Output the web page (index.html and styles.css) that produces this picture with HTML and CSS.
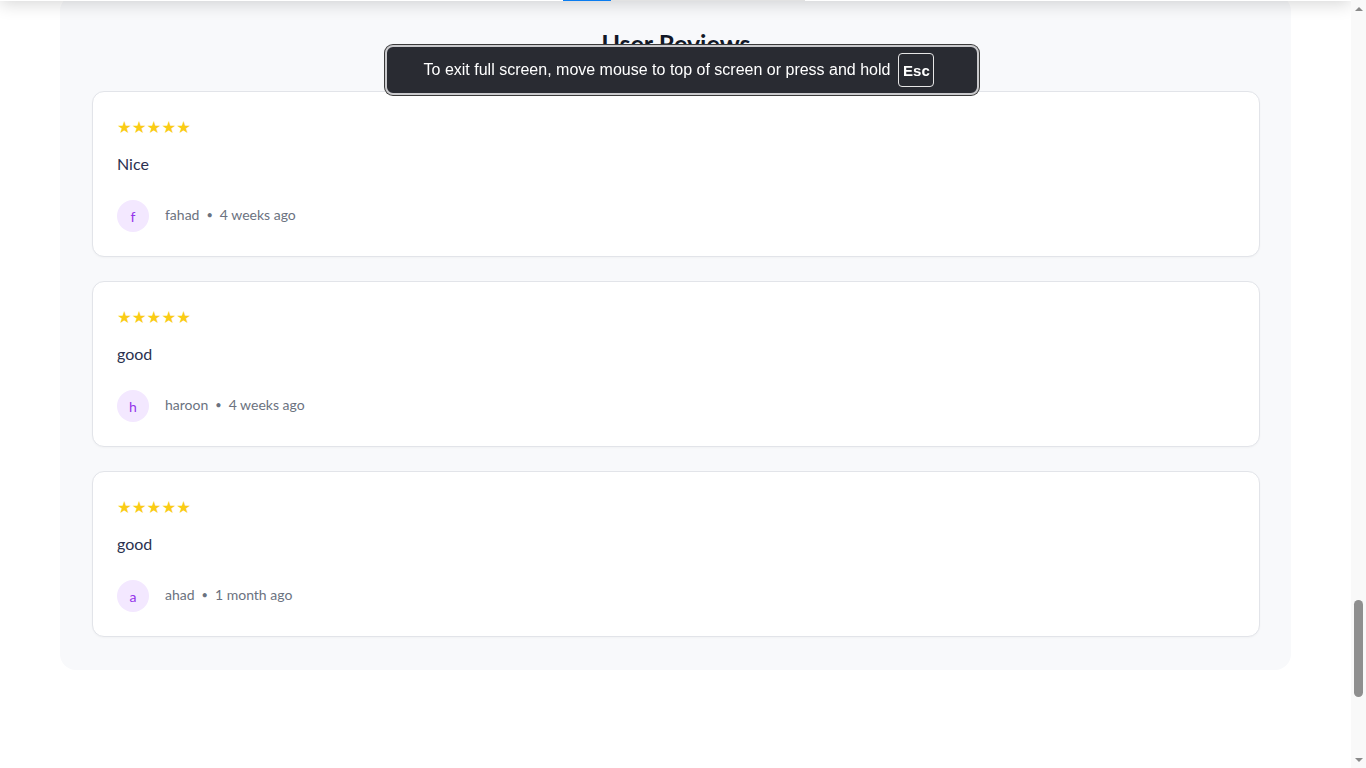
FILE: index.html
```html
<!DOCTYPE html>
<html lang="en">
<head>
<meta charset="utf-8">
<title>User Reviews</title>
<link rel="stylesheet" href="styles.css">
</head>
<body>
<header class="topbar">
  <div class="tabtrack"><span class="tabactive"></span></div>
</header>

<main class="page">
  <section class="reviews">
    <h2 class="reviews-title">User Reviews</h2>
    <div class="review-list">
      <article class="review">
        <div class="stars">★★★★★</div>
        <p class="review-text">Nice</p>
        <div class="review-meta">
          <span class="avatar">f</span>
          <span class="author">fahad</span>
          <span class="dot">•</span>
          <span class="when">4 weeks ago</span>
        </div>
      </article>
      <article class="review">
        <div class="stars">★★★★★</div>
        <p class="review-text">good</p>
        <div class="review-meta">
          <span class="avatar">h</span>
          <span class="author">haroon</span>
          <span class="dot">•</span>
          <span class="when">4 weeks ago</span>
        </div>
      </article>
      <article class="review">
        <div class="stars">★★★★★</div>
        <p class="review-text">good</p>
        <div class="review-meta">
          <span class="avatar">a</span>
          <span class="author">ahad</span>
          <span class="dot">•</span>
          <span class="when">1 month ago</span>
        </div>
      </article>
    </div>
  </section>
</main>

<div class="scrollbar" aria-hidden="true">
  <div class="sb-btn"><span class="arrow-up"></span></div>
  <div class="sb-track"><div class="sb-thumb"></div></div>
  <div class="sb-btn"><span class="arrow-down"></span></div>
</div>

<div class="fs-bubble">
  <span class="fs-text">To exit full screen, move mouse to top of screen or press and hold</span>
  <span class="fs-key">Esc</span>
</div>
</body>
</html>
```

FILE: styles.css
```css
html, body {
  margin: 0;
  padding: 0;
  background: #ffffff;
  overflow: hidden;
  height: 100%;
}

body {
  font-family: "Lato", "Noto Sans", sans-serif;
  color: #1f2937;
}

.page {
  margin-right: 15px;
}

.topbar {
  position: fixed;
  left: 0;
  right: 15px;
  top: -80px;
  height: 81px;
  background: #ffffff;
  box-shadow: 0 3px 16px rgba(0, 0, 0, 0.16);
  z-index: 5;
}

.tabtrack {
  position: absolute;
  left: 563px;
  width: 242px;
  bottom: 0;
  height: 2px;
  background: #e2e2e2;
}

.tabactive {
  display: block;
  width: 48px;
  height: 2px;
  background: #0a7cf0;
}

.reviews {
  margin: -5px 60px 0;
  padding: 32px 31px 33px 32px;
  background: #f8f9fb;
  border-radius: 16px;
}

.reviews-title {
  margin: 0 0 32px;
  text-align: center;
  font-size: 25px;
  line-height: 32px;
  font-weight: 700;
  color: #111827;
}

.review-list {
  display: flex;
  flex-direction: column;
  gap: 24px;
}

.review {
  background: #ffffff;
  border: 1px solid #e2e4e9;
  border-radius: 12px;
  padding: 24px;
  box-shadow: 0 1px 2px rgba(0, 0, 0, 0.03);
}

.stars {
  color: #facc15;
  font-family: "DejaVu Sans", sans-serif;
  font-size: 16.5px;
  line-height: 24px;
}

.review-text {
  margin: 12px 0 0;
  font-size: 16px;
  line-height: 24px;
  color: #2b3150;
}

.review-meta {
  margin-top: 24px;
  display: flex;
  align-items: center;
  font-size: 14px;
  color: #6b7280;
}

.author,
.dot,
.when {
  padding-bottom: 3px;
}

.avatar {
  width: 32px;
  height: 32px;
  border-radius: 50%;
  background: #f3e8ff;
  color: #9333ea;
  display: flex;
  align-items: center;
  justify-content: center;
  font-size: 14px;
  margin-right: 16px;
}

.dot {
  margin: 0 7px;
  font-size: 11px;
}

/* scrollbar drawn over the right edge */
.scrollbar {
  position: fixed;
  top: 0;
  right: 0;
  width: 15px;
  height: 100%;
  background: #f9f9f9;
  display: flex;
  flex-direction: column;
  z-index: 20;
}

.sb-btn {
  height: 17px;
  flex: none;
  display: flex;
  justify-content: center;
  align-items: center;
}

.sb-track {
  flex: 1;
  display: flex;
  flex-direction: column;
  align-items: center;
}

.sb-thumb {
  margin-top: 583px;
  width: 9px;
  height: 97px;
  border-radius: 5px;
  background: #8f8f8f;
}

.arrow-up {
  width: 0;
  height: 0;
  border-left: 4.5px solid transparent;
  border-right: 4.5px solid transparent;
  border-bottom: 4px solid #8a8a8a;
}

.arrow-down {
  width: 0;
  height: 0;
  border-left: 4.5px solid transparent;
  border-right: 4.5px solid transparent;
  border-top: 4px solid #8a8a8a;
}

/* full screen notice */
.fs-bubble {
  position: fixed;
  left: 385px;
  top: 45px;
  width: 594px;
  height: 50px;
  box-sizing: border-box;
  border: 2px solid #c9c9cc;
  border-radius: 8px;
  box-shadow: 0 0 0 1px #3a3a3a;
  background: #292b32;
  display: flex;
  align-items: center;
  justify-content: center;
  gap: 8px;
  padding-right: 6px;
  z-index: 10;
  font-family: "Liberation Sans", "Noto Sans", sans-serif;
  color: #ffffff;
}

.fs-text {
  font-size: 16px;
}

.fs-key {
  box-sizing: border-box;
  width: 36px;
  height: 34px;
  border: 1px solid #e6e6e6;
  border-radius: 4px;
  display: flex;
  align-items: center;
  justify-content: center;
  font-size: 15px;
  font-weight: 700;
}
```
